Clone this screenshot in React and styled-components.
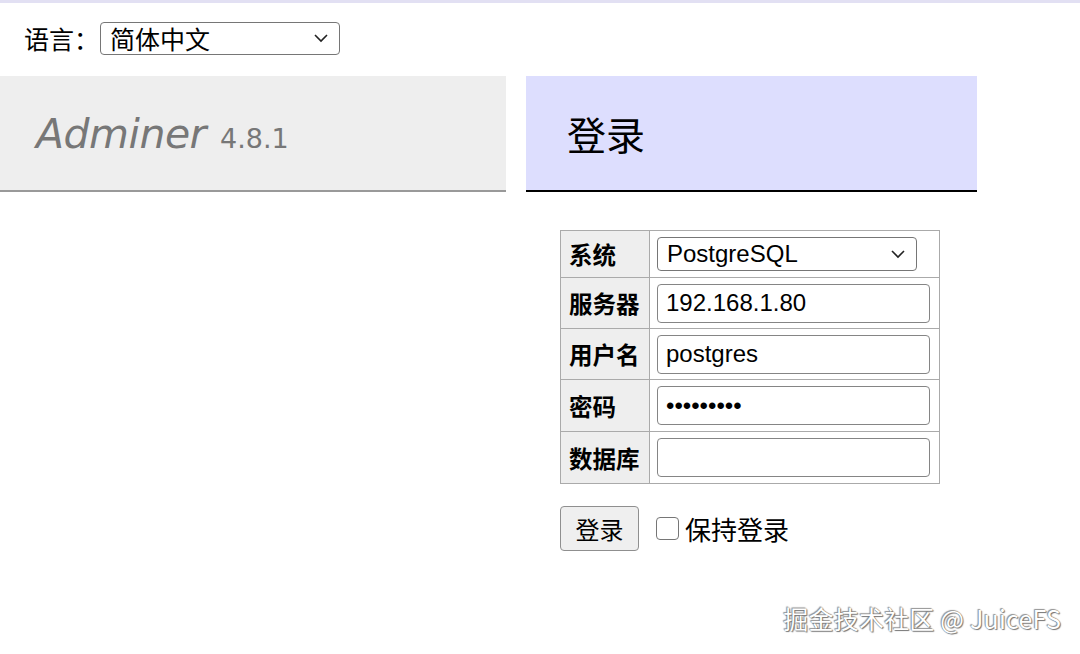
import React from "react";
import styled, { createGlobalStyle } from "styled-components";

const GlobalStyle = createGlobalStyle`
  html, body {
    margin: 0;
    padding: 0;
    background: #fff;
  }
  body {
    font-family: "Liberation Sans", "Noto Sans CJK SC", sans-serif;
    color: #000;
    width: 1080px;
    height: 654px;
    overflow: hidden;
  }
`;

const Page = styled.div`
  position: relative;
  width: 1080px;
  height: 654px;
  border-top: 3px solid #e2e0f3;
  box-sizing: border-box;
`;

const LangBar = styled.div`
  display: flex;
  align-items: center;
  height: 73px;
  padding-left: 24px;
  padding-bottom: 3px;
  box-sizing: border-box;
  font-size: 25px;
  gap: 1px;
`;

const Select = styled.div`
  display: flex;
  align-items: center;
  justify-content: space-between;
  box-sizing: border-box;
  width: ${(p) => p.$w}px;
  height: ${(p) => p.$h}px;
  padding: 0 10px 0 9px;
  border: 1px solid #767676;
  border-radius: 4px;
  background: #fff;
  font-size: ${(p) => p.$fs || 24}px;
`;

const Columns = styled.div`
  display: flex;
  gap: 20px;
`;

const Menu = styled.div`
  width: 506px;
`;

const Brand = styled.div`
  height: 113px;
  background: #eee;
  border-bottom: 2px solid #999;
  display: flex;
  align-items: center;
  padding-left: 36px;
  padding-top: 1px;
  box-sizing: content-box;
  color: #777;
`;

const BrandName = styled.span`
  font-family: "DejaVu Sans", sans-serif;
  font-style: italic;
  font-size: 41px;
  letter-spacing: -0.5px;
`;

const Version = styled.span`
  font-family: "DejaVu Sans", sans-serif;
  font-size: 27px;
  margin-left: 14px;
  margin-top: 9px;
`;

const Content = styled.div`
  width: 451px;
`;

const Heading = styled.h2`
  margin: 0;
  height: 114px;
  background: #dddefe;
  border-bottom: 2px solid #000;
  display: flex;
  align-items: center;
  padding-left: 41px;
  font-size: 39px;
  font-weight: normal;
`;

const FormTable = styled.table`
  margin: 38px 0 0 34px;
  border-collapse: collapse;
  border: 1px solid #999;
`;

const Label = styled.th`
  background: #eee;
  border: 1px solid #aaa;
  text-align: left;
  font-size: 23.5px;
  font-weight: bold;
  padding: 0 8px;
  width: 72px;
  height: ${(p) => p.$h}px;
`;

const Cell = styled.td`
  border: 1px solid #aaa;
  padding: 0 8px 0 7px;
  width: 274px;
`;

const Input = styled.div`
  box-sizing: border-box;
  width: 273px;
  height: 39px;
  border: 1px solid #858585;
  border-radius: 4px;
  padding-left: 8px;
  display: flex;
  align-items: center;
  font-size: 24px;
`;

const Actions = styled.div`
  display: flex;
  align-items: center;
  margin: 22px 0 0 34px;
  font-size: 24px;
`;

const Button = styled.div`
  box-sizing: border-box;
  width: 79px;
  height: 45px;
  border: 1px solid #8f8f8f;
  border-radius: 4px;
  background: #efefef;
  display: flex;
  align-items: center;
  justify-content: center;
  font-size: 24px;
`;

const Checkbox = styled.span`
  box-sizing: border-box;
  width: 23px;
  height: 23px;
  border: 1.5px solid #767676;
  border-radius: 4px;
  margin: 0 6px 0 17px;
  background: #fff;
`;

const KeepLabel = styled.span`
  font-size: 26px;
`;

const Watermark = styled.div`
  position: absolute;
  right: 19px;
  bottom: 18px;
  font-family: "Noto Sans CJK SC", sans-serif;
  font-size: 25px;
  color: #fff;
  text-shadow: 0 0 1px #666, 1px 1px 1px #777, -1px -1px 1px #999;
  letter-spacing: 0.2px;
`;

const Chevron = () => (
  <svg width="16" height="10" viewBox="0 0 16 10" fill="none">
    <path d="M2 2l6 6 6-6" stroke="#222" strokeWidth="1.6" />
  </svg>
);

const rows = [
  { label: "系统", h: 46, select: "PostgreSQL" },
  { label: "服务器", h: 50, value: "192.168.1.80" },
  { label: "用户名", h: 50, value: "postgres" },
  { label: "密码", h: 51, value: "•••••••••" },
  { label: "数据库", h: 51, value: "" },
];

export default function App() {
  return (
    <Page>
      <GlobalStyle />
      <LangBar>
        <span>语言：</span>
        <Select $w={240} $h={33} $fs={25}>
          <span>简体中文</span>
          <Chevron />
        </Select>
      </LangBar>
      <Columns>
        <Menu>
          <Brand>
            <BrandName>Adminer</BrandName>
            <Version>4.8.1</Version>
          </Brand>
        </Menu>
        <Content>
          <Heading>登录</Heading>
          <FormTable>
            <tbody>
              {rows.map((r) => (
                <tr key={r.label}>
                  <Label $h={r.h}>{r.label}</Label>
                  <Cell>
                    {r.select ? (
                      <Select $w={260} $h={34}>
                        <span>{r.select}</span>
                        <Chevron />
                      </Select>
                    ) : (
                      <Input>{r.value}</Input>
                    )}
                  </Cell>
                </tr>
              ))}
            </tbody>
          </FormTable>
          <Actions>
            <Button>登录</Button>
            <Checkbox />
            <KeepLabel>保持登录</KeepLabel>
          </Actions>
        </Content>
      </Columns>
      <Watermark>掘金技术社区 @ JuiceFS</Watermark>
    </Page>
  );
}
